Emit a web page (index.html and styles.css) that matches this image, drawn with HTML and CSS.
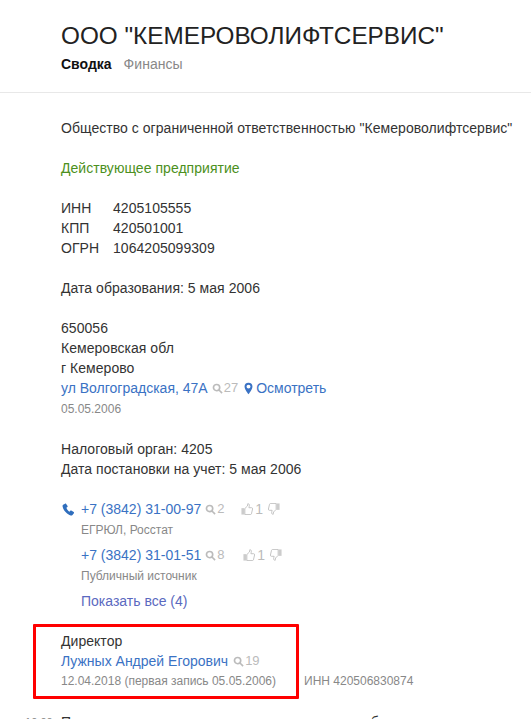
FILE: index.html
```html
<!DOCTYPE html>
<html lang="ru">
<head>
<meta charset="utf-8">
<title>ООО "КЕМЕРОВОЛИФТСЕРВИС"</title>
<link rel="stylesheet" href="styles.css">
</head>
<body>
<header class="head">
  <h1 class="title">ООО "КЕМЕРОВОЛИФТСЕРВИС"</h1>
  <nav class="tabs"><b class="tab-on">Сводка</b><span class="tab">Финансы</span></nav>
</header>
<main class="main">
  <p class="block">Общество с ограниченной ответственностью "Кемероволифтсервис"</p>
  <p class="block green">Действующее предприятие</p>
  <div class="block codes">
    <span>ИНН</span><span>4205105555</span>
    <span>КПП</span><span>420501001</span>
    <span>ОГРН</span><span>1064205099309</span>
  </div>
  <p class="block">Дата образования: 5 мая 2006</p>
  <div class="block addr">
    <div>650056</div>
    <div>Кемеровская обл</div>
    <div>г Кемерово</div>
    <div class="line"><a class="link">ул Волгоградская, 47А</a><span class="count ml4"><svg class="mag" viewBox="0 0 12 12"><circle cx="5" cy="5" r="3.4"/><path d="M7.6 7.6 11 11"/></svg>27</span><svg class="pin" viewBox="0 0 10 14"><path fill-rule="evenodd" d="M5 .5A4.4 4.4 0 0 0 .6 4.9C.6 8 5 13.5 5 13.5S9.4 8 9.4 4.9A4.4 4.4 0 0 0 5 .5Zm0 2.2a2.2 2.2 0 1 1 0 4.4 2.2 2.2 0 0 1 0-4.4Z"/></svg><a class="link">Осмотреть</a></div>
    <div class="small addr-date">05.05.2006</div>
  </div>
  <div class="block">
    <div>Налоговый орган: 4205</div>
    <div>Дата постановки на учет: 5 мая 2006</div>
  </div>
  <section class="phones">
    <svg class="phone-ico" viewBox="0 0 14 14"><path d="M3.3.8 1.2 2C.6 2.400.5 3.200.7 4c.8 3.900 4.700 8.300 8.600 9.400.8.200 1.500 0 2-.6l1.500-1.800c.3-.4.2-.9-.2-1.200L10 8.200c-.4-.3-.8-.2-1.100.1l-.9 1C6.500 8.500 5.200 6.800 4.700 5.200l1.100-.8c.3-.3.400-.7.200-1.100L4.500 1.100C4.200.7 3.700.5 3.300.8Z"/></svg>
    <div class="phone-row"><a class="link num">+7 (3842) 31-00-97</a><span class="count ml4 w-search"><svg class="mag" viewBox="0 0 12 12"><circle cx="5" cy="5" r="3.4"/><path d="M7.6 7.6 11 11"/></svg>2</span><span class="votes"><svg class="thumb" viewBox="0 0 14 14"><rect x=".5" y="6" width="3.500" height="7.500" class="cuff"/><path d="M4.500 6.500 7.500 3.500 8 .8c1.500 0 2 1.200 1.600 3L9.200 5.500h3.300c.8 0 1.200.8 1 1.500l-1.300 5.500c-.2.600-.6 1-1.200 1H4.500Z"/></svg>1<svg class="thumb down" viewBox="0 0 14 14"><rect x=".5" y="6" width="3.500" height="7.500" class="cuff"/><path d="M4.500 6.500 7.500 3.500 8 .8c1.500 0 2 1.200 1.600 3L9.200 5.500h3.300c.8 0 1.200.8 1 1.500l-1.300 5.500c-.2.600-.6 1-1.200 1H4.500Z"/></svg></span></div>
    <div class="small src">ЕГРЮЛ, Росстат</div>
    <div class="phone-row second"><a class="link num">+7 (3842) 31-01-51</a><span class="count ml4 w-search2"><svg class="mag" viewBox="0 0 12 12"><circle cx="5" cy="5" r="3.4"/><path d="M7.6 7.6 11 11"/></svg>8</span><span class="votes"><svg class="thumb" viewBox="0 0 14 14"><rect x=".5" y="6" width="3.500" height="7.500" class="cuff"/><path d="M4.500 6.500 7.500 3.500 8 .8c1.500 0 2 1.200 1.600 3L9.200 5.500h3.300c.8 0 1.200.8 1 1.500l-1.300 5.500c-.2.600-.6 1-1.200 1H4.500Z"/></svg>1<svg class="thumb down" viewBox="0 0 14 14"><rect x=".5" y="6" width="3.500" height="7.500" class="cuff"/><path d="M4.500 6.500 7.500 3.500 8 .8c1.500 0 2 1.200 1.600 3L9.200 5.500h3.300c.8 0 1.200.8 1 1.500l-1.300 5.500c-.2.600-.6 1-1.200 1H4.500Z"/></svg></span></div>
    <div class="small src">Публичный источник</div>
    <a class="link all">Показать все (4)</a>
  </section>
  <section class="director">
    <div>Директор</div>
    <div class="line"><a class="link">Лужных Андрей Егорович</a><span class="count ml5"><svg class="mag" viewBox="0 0 12 12"><circle cx="5" cy="5" r="3.4"/><path d="M7.6 7.6 11 11"/></svg>19</span></div>
    <div class="small dir-meta"><span>12.04.2018 (первая запись 05.05.2006)</span><span class="dir-inn">ИНН 420506830874</span></div>
    <div class="redbox"></div>
  </section>
  <div class="next"><span class="time">10:00</span><span>Предыдущая запись о руководителе компании была</span></div>
</main>
</body>
</html>
```
FILE: styles.css
```css
html, body { margin: 0; height: 719px; overflow: hidden; background: #fff; }
body { font: 14px/20px "Liberation Sans", Arial, sans-serif; color: #333; letter-spacing: .04px; }
.head { padding: 21px 0 0 61px; height: 71px; border-bottom: 1px solid #e8e8e8; }
.title { margin: 0; font-size: 24.3px; line-height: 30px; font-weight: 400; color: #222; white-space: nowrap; letter-spacing: 0; }
.tabs { display: flex; gap: 12px; margin-top: 3px; line-height: 20px; }
.tab-on { color: #111; letter-spacing: 0; }
.tab { color: #888; }
.main { padding: 25px 0 0 61px; white-space: nowrap; }
.block { margin: 0 0 20px; }
.green { color: #4c9020; }
.codes { display: grid; grid-template-columns: 52px auto; justify-content: start; }
.link { color: #3a72c4; letter-spacing: 0; }
.line { display: flex; align-items: center; }
.small { font-size: 12px; color: #888; letter-spacing: 0; }
.addr-date { margin-top: 1px; }
.count { display: inline-flex; align-items: center; font-size: 13px; color: #bbb; letter-spacing: 0; }
.ml4 { margin-left: 4px; }
.ml5 { margin-left: 5px; }
.mag { width: 11px; height: 11px; margin-right: 1px; fill: none; stroke: #bbb; stroke-width: 1.8; }
.pin { width: 9px; height: 13px; margin: 0 3px 0 6px; fill: #3a72c4; }
.phones { position: relative; padding: 0 0 0 20px; }
.phone-ico { position: absolute; left: 1px; top: 4px; width: 13px; height: 13px; fill: #2f6ebd; }
.phone-row { display: flex; align-items: center; }
.second { margin-top: 5px; }
.src { margin-top: 1px; }
.w-search { width: 36px; }
.w-search2 { width: 38px; }
.votes { display: inline-flex; align-items: center; font-size: 14px; color: #bbb; gap: 2px; }
.thumb { width: 12px; height: 12px; fill: #fff; stroke: #bbb; stroke-width: 1; }
.thumb .cuff { fill: #ccc; stroke: none; }
.down { transform: scale(-1, -1); margin-left: 3px; }
.all { display: block; margin-top: 5px; color: #5a69c0; }
.director { position: relative; margin-top: 20px; }
.dir-inn { margin-left: 28px; }
.redbox { position: absolute; left: -28px; top: -7px; width: 260px; height: 69px; border: 3px solid #f00; border-radius: 1px; pointer-events: none; }
.next { position: relative; margin-top: 21px; }
.time { position: absolute; left: -36px; top: 0; font-size: 11px; color: #888; }
```
